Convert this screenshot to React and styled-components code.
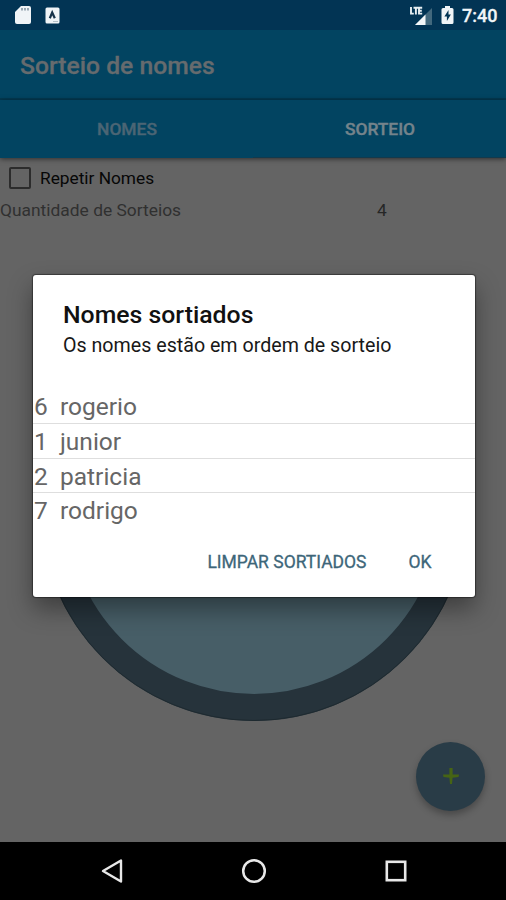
import React from "react";
import styled, { createGlobalStyle } from "styled-components";

const Global = createGlobalStyle`
  * { box-sizing: border-box; }
  body { margin: 0; background: #000; font-family: Roboto, sans-serif; }
  svg { display: block; }
`;

const Screen = styled.div`
  position: relative;
  display: flex;
  flex-direction: column;
  width: 506px;
  height: 900px;
  overflow: hidden;
  background: #646464;
`;

const StatusBar = styled.header`
  display: flex;
  flex: none;
  align-items: center;
  justify-content: space-between;
  height: 30px;
  padding: 0 10px 0 14px;
  background: #023454;
`;

const StatusGroup = styled.div`
  display: flex;
  align-items: center;
  gap: ${(p) => p.$gap}px;
`;

const Clock = styled.span`
  font-size: 18px;
  font-weight: 500;
  line-height: 30px;
  width: 34px;
  white-space: nowrap;
  color: #f1f5f8;
  -webkit-text-stroke: 0.3px;
  padding-top: 2px;
`;

const AppBar = styled.div`
  flex: none;
  height: 70px;
  padding: 0 20px;
  background: #024461;
  border-bottom: 2px solid #033a52;
`;

const AppTitle = styled.h1`
  margin: 0;
  font-size: 24.7px;
  font-weight: 500;
  line-height: 72px;
  color: #666b6e;
  -webkit-text-stroke: 0.3px;
`;

const Tabs = styled.nav`
  display: grid;
  grid-template-columns: 1fr 1fr;
  flex: none;
  height: 58px;
  background: #024461;
  box-shadow: 0 1px 5px rgba(0, 0, 0, 0.55);
`;

const Tab = styled.div`
  display: flex;
  align-items: center;
  justify-content: center;
  font-size: 17.4px;
  font-weight: 500;
  padding: 1px 0 0 1px;
  color: ${(p) => (p.$active ? "#74838b" : "#4b6574")};
  -webkit-text-stroke: 0.4px;
  border-bottom: 1px solid ${(p) => (p.$active ? "#123a4d" : "#024461")};
`;

const Content = styled.main`
  flex: 1;
`;

const CheckRow = styled.div`
  display: flex;
  align-items: center;
  gap: 9px;
  height: 40px;
  padding-left: 9px;
  font-size: 17.3px;
  color: #070707;
`;

const Box = styled.span`
  width: 22px;
  height: 22px;
  border: 2px solid #2c2c2c;
  border-radius: 2px;
`;

const CountRow = styled.div`
  display: grid;
  grid-template-columns: 259px 246px;
  height: 25px;
  line-height: 25px;
  font-size: 17.4px;
  color: #303030;
`;

const CountValue = styled.span`
  text-align: center;
  color: #262626;
`;

const Wheel = styled.div`
  position: absolute;
  left: 40px;
  top: 293px;
  width: 428px;
  height: 428px;
  border: 27px solid #26333b;
  border-radius: 50%;
  background: #475e67;
  outline: 1px solid #1e2a30;
  outline-offset: -1px;
`;

const Fab = styled.button`
  position: absolute;
  left: 416px;
  top: 742px;
  display: grid;
  place-items: center;
  width: 69px;
  height: 69px;
  padding: 0 0 2px;
  border: 0;
  border-radius: 50%;
  background: #293c47;
  box-shadow: 0 4px 7px rgba(0, 0, 0, 0.28);
`;

const NavBar = styled.footer`
  display: grid;
  grid-template-columns: 142px 142px;
  grid-auto-columns: 142px;
  grid-auto-flow: column;
  justify-content: center;
  place-items: center;
  flex: none;
  height: 58px;
  padding-left: 2px;
  background: #000;
`;

const Dialog = styled.section`
  position: absolute;
  left: 33px;
  top: 275px;
  display: flex;
  flex-direction: column;
  width: 441.5px;
  height: 321.5px;
  border-radius: 3px;
  background: #fff;
  box-shadow: 0 0 1px 1px rgba(0, 0, 0, 0.4), 0 12px 24px rgba(0, 0, 0, 0.38);
`;

const DialogHead = styled.div`
  height: 114px;
  padding: 25px 30px 0;
`;

const DialogTitle = styled.h2`
  margin: 0;
  font-size: 24.8px;
  font-weight: 500;
  line-height: 30px;
  color: #111;
`;

const DialogMessage = styled.p`
  margin: 1px 0 0;
  font-size: 19.65px;
  line-height: 30px;
  color: #181818;
`;

const Names = styled.ul`
  margin: 0;
  padding: 0;
  list-style: none;
`;

const NameRow = styled.li`
  display: grid;
  grid-template-columns: 26px 1fr;
  height: 34.8px;
  padding-left: 1px;
  line-height: 35px;
  font-size: 24.5px;
  color: #666;
  border-bottom: 1.5px solid #dedede;
  &:last-child { border-bottom: 0; }
`;

const Actions = styled.div`
  display: flex;
  justify-content: flex-end;
  gap: 42px;
  margin-top: 17px;
  padding-right: 43px;
`;

const Action = styled.button`
  padding: 0;
  border: 0;
  background: none;
  font: 400 17.5px/34px Roboto, sans-serif;
  -webkit-text-stroke: 0.3px;
  color: #3d6679;
`;

const names = [
  [6, "rogerio"],
  [1, "junior"],
  [2, "patricia"],
  [7, "rodrigo"],
];

const SdCard = () => (
  <svg width="18" height="20" viewBox="0 0 18 20">
    <path d="M7 1h8q2 0 2 2v14q0 2-2 2H3q-2 0-2-2V7z" fill="#f0f4f7" />
    <path d="M8 3v2.500M11 3v2.500M14 3v2.500" stroke="#8496a3" strokeWidth="1.600" />
  </svg>
);

const LetterBadge = () => (
  <svg width="15" height="17" viewBox="0 0 15 17">
    <rect x="0.5" y="0.5" width="14" height="16" rx="1.5" fill="#f0f4f7" />
    <path d="M4.8 11.2 7.2 5.5l2.6 5.7" fill="none" stroke="#17334a" strokeWidth="2.200" />
    <path d="M8 14.500h5" stroke="#b4c0c8" />
  </svg>
);

const Signal = () => (
  <svg width="24" height="21" viewBox="0 0 24 21">
    <path d="M6 20 23 3v17z" fill="#42687d" />
    <path d="M6 20 16.500 9.500V20z" fill="#f4f7f9" />
    <path d="M2 2v6.600h2.800M4.500 2.800h4.700M6.900 3v6.400M13.200 2.800H10v5.800h3.200M10 5.700h2.800" fill="none" stroke="#e6eef2" strokeWidth="1.900" />
  </svg>
);

const Battery = () => (
  <svg width="13" height="20" viewBox="0 0 13 20">
    <path d="M4 1h5v2h2q1.5 0 1.5 1.5v13Q12.5 19 11 19H2Q.5 19 .5 17.5v-13Q.5 3 2 3h2z" fill="#f0f4f7" />
    <path d="M7.5 5 3.4 11.5h2.500V16l4-6.500H7.500z" fill="#023454" />
  </svg>
);

export default function App() {
  return (
    <Screen>
      <Global />
      <StatusBar>
        <StatusGroup $gap={13}>
          <SdCard />
          <LetterBadge />
        </StatusGroup>
        <StatusGroup $gap={8}>
          <Signal />
          <Battery />
          <Clock>7:40</Clock>
        </StatusGroup>
      </StatusBar>
      <AppBar>
        <AppTitle>Sorteio de nomes</AppTitle>
      </AppBar>
      <Tabs>
        <Tab>NOMES</Tab>
        <Tab $active>SORTEIO</Tab>
      </Tabs>
      <Content>
        <CheckRow>
          <Box />
          Repetir Nomes
        </CheckRow>
        <CountRow>
          <span>Quantidade de Sorteios</span>
          <CountValue>4</CountValue>
        </CountRow>
      </Content>
      <Wheel />
      <Fab>
        <svg width="18" height="18" viewBox="0 0 18 18">
          <path d="M7.400 1h3.200v6.600H17L16.500 10l-5.900.8L10 17H8l-.6-6.200-5.900-.8L1 7.600h6.400z" fill="#466414" />
        </svg>
      </Fab>
      <NavBar>
        <svg width="24" height="26" viewBox="0 0 24 26">
          <path d="M21 2.500v21L3 13z" fill="none" stroke="#e8e8e8" strokeWidth="2.400" strokeLinejoin="round" />
        </svg>
        <svg width="26" height="26" viewBox="0 0 26 26">
          <circle cx="13" cy="13" r="10.800" fill="none" stroke="#e8e8e8" strokeWidth="2.500" />
        </svg>
        <svg width="24" height="24" viewBox="0 0 24 24">
          <rect x="2.800" y="2.800" width="18.400" height="18.400" fill="none" stroke="#e8e8e8" strokeWidth="2.600" />
        </svg>
      </NavBar>
      <Dialog>
        <DialogHead>
          <DialogTitle>Nomes sortiados</DialogTitle>
          <DialogMessage>Os nomes estão em ordem de sorteio</DialogMessage>
        </DialogHead>
        <Names>
          {names.map(([number, name]) => (
            <NameRow key={number}>
              <span>{number}</span>
              <span>{name}</span>
            </NameRow>
          ))}
        </Names>
        <Actions>
          <Action>LIMPAR SORTIADOS</Action>
          <Action>OK</Action>
        </Actions>
      </Dialog>
    </Screen>
  );
}
